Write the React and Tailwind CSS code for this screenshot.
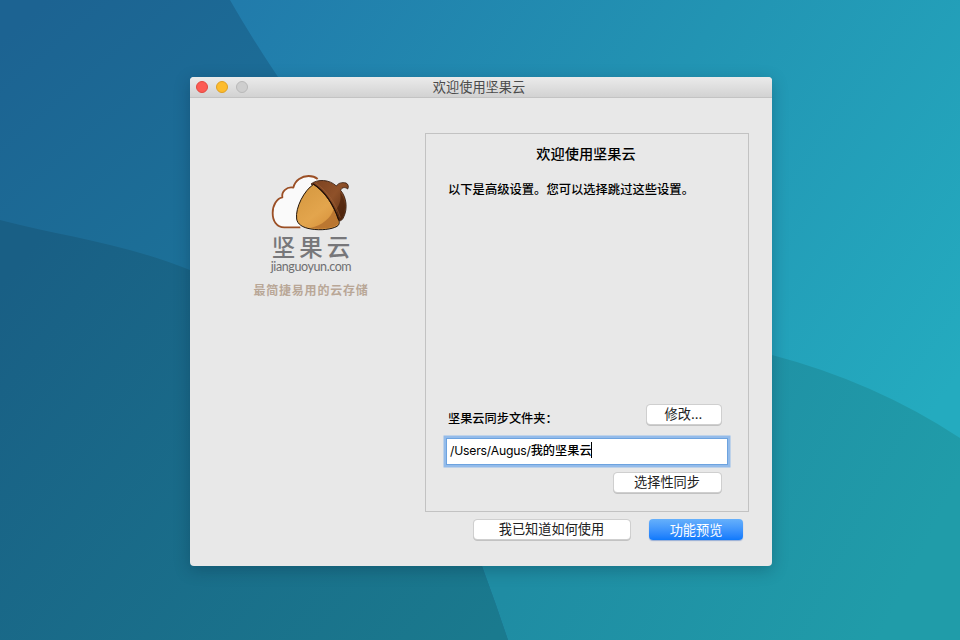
import React from "react";

function Wallpaper() {
  return (
    <svg className="absolute inset-0 h-full w-full" viewBox="0 0 960 640" aria-hidden="true">
      <defs>
        <linearGradient id="base" gradientUnits="userSpaceOnUse" x1="240" y1="0" x2="900" y2="460">
          <stop offset="0" stopColor="#217bab" />
          <stop offset="0.5" stopColor="#2294b3" />
          <stop offset="1" stopColor="#24abbf" />
        </linearGradient>
        <linearGradient id="upperLeft" gradientUnits="userSpaceOnUse" x1="0" y1="40" x2="190" y2="260">
          <stop offset="0" stopColor="#1c6392" />
          <stop offset="1" stopColor="#1c7098" />
        </linearGradient>
        <linearGradient id="lowerLeft" gradientUnits="userSpaceOnUse" x1="20" y1="260" x2="490" y2="640">
          <stop offset="0" stopColor="#195f85" />
          <stop offset="1" stopColor="#1a7a8e" />
        </linearGradient>
        <linearGradient id="lowerRight" gradientUnits="userSpaceOnUse" x1="560" y1="480" x2="880" y2="640">
          <stop offset="0" stopColor="#1f8ca3" />
          <stop offset="1" stopColor="#209ca9" />
        </linearGradient>
      </defs>
      <rect width="960" height="640" fill="url(#base)" />
      <path d="M480 340 Q630 315 772 355 Q875 382 960 438 V640 H480Z" fill="url(#lowerRight)" />
      <path d="M0 0 H230 Q250 35 278 77 Q410 290 482 566 Q496 604 508 640 H0Z" fill="url(#upperLeft)" />
      <path d="M0 220 C60 236 120 242 190 270 Q390 350 482 566 Q496 604 508 640 H0Z" fill="url(#lowerLeft)" />
    </svg>
  );
}

function AcornLogo() {
  return (
    <svg className="h-[65px] w-[92px] shrink-0" viewBox="0 0 276 195" aria-hidden="true">
      <defs>
        <linearGradient id="nut" x1="0.2" y1="0.1" x2="0.8" y2="0.9">
          <stop offset="0" stopColor="#d79a42" />
          <stop offset="0.6" stopColor="#e3a54d" />
          <stop offset="1" stopColor="#d8933d" />
        </linearGradient>
        <linearGradient id="cap" x1="0" y1="0" x2="1" y2="0.8">
          <stop offset="0" stopColor="#7a4120" />
          <stop offset="0.55" stopColor="#8f5129" />
          <stop offset="1" stopColor="#5f3014" />
        </linearGradient>
      </defs>
      <path
        d="M106 172 H58 C34 172 23 152 23 129 C23 104 36 85 52 82 C49 65 65 49 85 53 C90 30 111 18 131 18 C143 18 151 21 158 27 L165 90Z"
        fill="#fafafa"
      />
      <path
        d="M106 172 H58 C34 172 23 152 23 129 C23 104 36 85 52 82 C49 65 65 49 85 53 C90 30 111 18 131 18 C143 18 151 21 158 27"
        fill="none" stroke="#9b4f25" strokeWidth="5.5" strokeLinejoin="round"
      />
      <path
        d="M138 42 C157 26 194 28 214 48 C220 39 231 36 243 39 C250 42 252 51 248 57 C240 50 230 52 227 61 C245 83 248 115 237 139 C233 149 229 153 221 153 C205 110 180 70 138 42Z"
        fill="url(#cap)" stroke="#33190c" strokeWidth="2.5" strokeLinejoin="round"
      />
      <path d="M214 118 C226 102 229 84 225 66 C241 86 244 112 235 137 C232 145 229 149 223 150Z" fill="#3d1806" opacity="0.55" />
      <path
        d="M146 43 C118 60 90 114 95 147 C97 162 112 173 138 177 C168 182 200 178 216 169 C224 164 224 156 220 147 C205 105 182 68 146 43Z"
        fill="url(#nut)" stroke="#21150c" strokeWidth="3"
      />
      <path d="M136 174 C172 166 198 144 206 117 C212 130 216 141 219 151 C222 160 218 165 211 168 C190 177 161 178 136 174Z" fill="#b06c2c" opacity="0.75" />
      <path d="M144 41 C184 66 207 107 221 150" fill="none" stroke="#251007" strokeWidth="3.5" />
      <path d="M151 38 C189 64 213 103 226 143" fill="none" stroke="#a5673c" strokeWidth="2" opacity="0.7" />
    </svg>
  );
}

function Brand() {
  return (
    <aside className="flex w-[242px] shrink-0 flex-col items-center pt-[72px]">
      <AcornLogo />
      <div className="mt-px h-[24px] pl-[4px] text-[23.5px] leading-[24px] font-medium tracking-[4px] whitespace-nowrap text-[#77777a]">坚果云</div>
      <div className="h-[13px] font-[Lato] text-[12.5px] leading-[13px] tracking-[-0.4px] whitespace-nowrap text-[#6f6f72]">jianguoyun.com</div>
      <div className="mt-[9px] text-[12px] leading-[18px] font-bold tracking-[0.8px] whitespace-nowrap text-[#b9a797]">最简捷易用的云存储</div>
    </aside>
  );
}

function PushButton({ children, className }) {
  return (
    <button
      className={
        "flex h-[19px] items-center justify-center rounded-[3.5px] bg-white pr-px text-[13.2px] leading-[19px] whitespace-nowrap text-[#222] shadow-[0_0_0_1px_#cfcfcf,0_1px_0_1px_#c2c2c2] " +
        className
      }
    >
      {children}
    </button>
  );
}

function TitleBar() {
  return (
    <header className="grid h-[21px] shrink-0 grid-cols-[1fr_auto_1fr] items-center rounded-t-[4px] border-b border-[#c3c3c3] bg-linear-to-b from-[#ebebeb] to-[#d2d2d2]">
      <div className="flex gap-2 pb-px pl-[6px]">
        <i className="h-3 w-3 rounded-full border border-[#e2483f] bg-[#fc5b54]" />
        <i className="h-3 w-3 rounded-full border border-[#dfa023] bg-[#fdbc2e]" />
        <i className="h-3 w-3 rounded-full border border-[#b9b9b9] bg-[#cecece]" />
      </div>
      <h1 className="pr-[4px] text-[13.2px] leading-5 text-[#4b4b4b]">欢迎使用坚果云</h1>
    </header>
  );
}

function SettingsPanel() {
  return (
    <section className="flex h-[379px] w-[324px] flex-col border border-[#c2c2c2] pt-[10px]">
      <h2 className="pr-[2px] text-center text-[14.2px] leading-5 font-medium text-black">欢迎使用坚果云</h2>
      <p className="mt-[16px] pl-[22px] text-[12.3px] leading-5 font-medium whitespace-nowrap text-black">以下是高级设置。您可以选择跳过这些设置。</p>
      <div className="mt-[205px] flex h-[24px] items-start justify-between pr-[27px] pl-[22px]">
        <label className="pt-[4px] text-[12.2px] leading-5 font-medium whitespace-nowrap text-black">坚果云同步文件夹：</label>
        <PushButton className="w-[74px]">修改...</PushButton>
      </div>
      <div className="mt-[9px] ml-[20px] flex h-[27px] w-[282px] items-start border border-[#6da3df] bg-white pt-[3px] pl-[3px] shadow-[0_0_0_2.5px_#93bbea]">
        <span className="text-[12.2px] leading-[18px] font-medium whitespace-nowrap text-black"><span className="font-normal tracking-[-0.2px]">/Users/Augus/</span>我的坚果云</span>
        <span className="-ml-px h-4 w-px bg-black" />
      </div>
      <div className="mt-[8px] flex justify-end pr-[27px]">
        <PushButton className="w-[107px]">选择性同步</PushButton>
      </div>
    </section>
  );
}

export default function App() {
  return (
    <div className="relative flex h-[640px] w-[960px] items-start overflow-hidden bg-[#1f8ca3] pt-[77px] pl-[190px] font-[Inter,'Noto_Sans_CJK_SC',sans-serif]">
      <Wallpaper />
      <main className="relative flex h-[489px] w-[582px] flex-col rounded-[4px] bg-[#e8e8e8] shadow-[0_4px_16px_rgba(0,25,45,0.25)]">
        <TitleBar />
        <div className="flex">
          <Brand />
          <div className="-ml-[7px] flex flex-col pt-[35px]">
            <SettingsPanel />
            <footer className="mt-[8px] flex gap-[19px] pl-[49px]">
              <PushButton className="w-[156px]">我已知道如何使用</PushButton>
              <button className="-mt-px flex h-[21px] w-[94px] items-center justify-center rounded-[4px] bg-linear-to-b from-[#66b0fb] to-[#0c79fc] text-[13.2px] leading-5 text-white shadow-[0_1px_1px_rgba(0,65,180,0.35)]">功能预览</button>
            </footer>
          </div>
        </div>
      </main>
    </div>
  );
}
